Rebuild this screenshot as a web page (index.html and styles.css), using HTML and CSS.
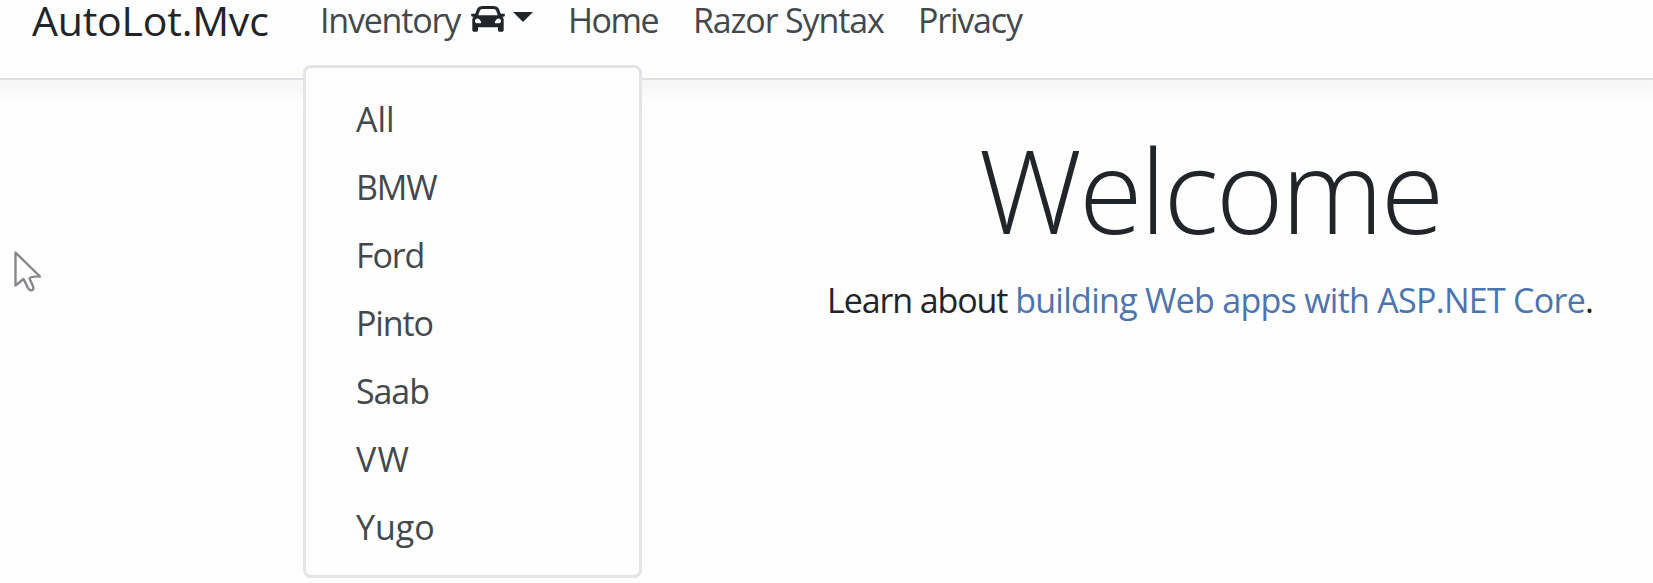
FILE: index.html
```html
<!DOCTYPE html>
<html lang="en">
<head>
<meta charset="utf-8">
<title>AutoLot.Mvc</title>
<link rel="stylesheet" href="styles.css">
</head>
<body>
<header class="navbar">
  <a class="brand">AutoLot.Mvc</a>
  <nav class="nav">
    <div class="nav-item dropdown">
      <a class="nav-link toggle"><span class="inventory">Inventory</span>
        <svg class="car" viewBox="0 0 34 27"><path fill="#212529" fill-rule="evenodd" d="M12 1h10c3 0 5 1 6 3.200L29.800 8.700h3.200c.8 0 1.100.6.9 1.300l-.3 1.100c-.1.500-.5.700-1 .7h-1.200c.9.900 1.300 2 1.300 3.300V25c0 1.100-.7 1.800-1.800 1.800h-2.200c-1.100 0-1.800-.7-1.800-1.800v-2.700H7.100V25c0 1.100-.7 1.800-1.800 1.800H3.100C2 26.800 1.300 26.100 1.300 25v-9.900c0-1.300.4-2.400 1.300-3.300H1.400c-.5 0-.9-.2-1-.7L.1 10C-.1 9.300.2 8.700 1 8.700h3.200L6 4.200C7 2 9 1 12 1zM12 4c-1.800 0-2.700.5-3.200 1.800L7.300 10.300h19.400l-1.500-4.500C24.700 4.500 23.800 4 22 4zM6.600 13.500c-1.600 0-2.600 1-2.600 2.400s1 2.400 2.600 2.400h2.200c1.200 0 1.700-.7 1.200-1.600-.9-1.700-1.800-3.200-3.400-3.200zm20.800 0c-1.600 0-2.500 1.500-3.400 3.200-.5.900 0 1.600 1.200 1.600h2.200c1.600 0 2.600-1 2.600-2.400s-1-2.400-2.600-2.400z"/></svg>
        <span class="caret"></span></a>
      <div class="menu">
        <a class="menu-item">All</a>
        <a class="menu-item tight">BMW</a>
        <a class="menu-item tight">Ford</a>
        <a class="menu-item tight">Pinto</a>
        <a class="menu-item tight">Saab</a>
        <a class="menu-item loose">VW</a>
        <a class="menu-item">Yugo</a>
      </div>
    </div>
    <a class="nav-link home">Home</a>
    <a class="nav-link razor">Razor Syntax</a>
    <a class="nav-link privacy">Privacy</a>
  </nav>
</header>
<main class="content">
  <h1 class="title">Welcome</h1>
  <p class="lead">Learn about <a class="link">building Web apps with ASP.NET Core</a>.</p>
</main>
<svg class="cursor" viewBox="0 0 28 42"><path d="M1.500 1.500V34.500L9.500 28L14 37Q16 40.500 19 38.500Q20 37 18.500 34L15.500 27.500Q17 25 26 25.500Z" fill="#fff" stroke="#85878c" stroke-width="2.400" stroke-linejoin="round"/></svg>
</body>
</html>
```
FILE: styles.css
```css
* { box-sizing: border-box; }
body {
  margin: 0;
  height: 583px;
  overflow: hidden;
  background: #fefefe;
  color: #212529;
  font-family: "Open Sans", "Noto Sans", sans-serif;
  font-size: 34px;
  line-height: 48px;
}
.navbar {
  display: flex;
  height: 80px;
  padding-left: 32px;
  border-bottom: 2px solid #dfe0e5;
  box-shadow: 0 4px 16px 12px rgba(0, 0, 0, .03);
  white-space: nowrap;
}
.brand { width: 270px; font-size: 41px; line-height: 40px; letter-spacing: -.2px; }
.nav { display: flex; color: #43484d; line-height: 40px; letter-spacing: -1.1px; }
.nav-item { position: relative; width: 266px; padding-left: 18px; }
.toggle { display: flex; }
.inventory { width: 151px; letter-spacing: -1.2px; }
.car { width: 34px; height: 27px; margin-top: 5px; }
.caret {
  height: 0;
  margin: 12px 0 0 8px;
  border: 10px solid transparent;
  border-top-color: #212529;
  border-bottom: 0;
}
.home { width: 125px; letter-spacing: -1.5px; }
.razor { width: 225px; letter-spacing: -1.15px; }
.privacy { letter-spacing: -1.2px; }
.menu {
  position: absolute;
  top: 65px;
  left: 1px;
  width: 339px;
  height: 513px;
  padding: 17px 0 0 50px;
  border: 3px solid #e3e3e8;
  border-radius: 8px;
  background: #fefefe;
}
.menu-item { display: block; height: 68px; line-height: 68px; letter-spacing: 0; }
.tight { letter-spacing: -1.1px; }
.loose { letter-spacing: 1.2px; }
.content { width: 886px; margin-left: 767px; text-align: center; }
.title {
  margin: 30px 0 0;
  font-size: 116px;
  font-weight: 300;
  line-height: 158px;
  letter-spacing: -2.8px;
}
.lead { margin: 8px 0 0; white-space: nowrap; letter-spacing: -1.1px; }
.link { color: #4b74b0; letter-spacing: -.72px; }
.cursor { position: absolute; left: 14px; top: 251px; width: 28px; height: 42px; }
```
